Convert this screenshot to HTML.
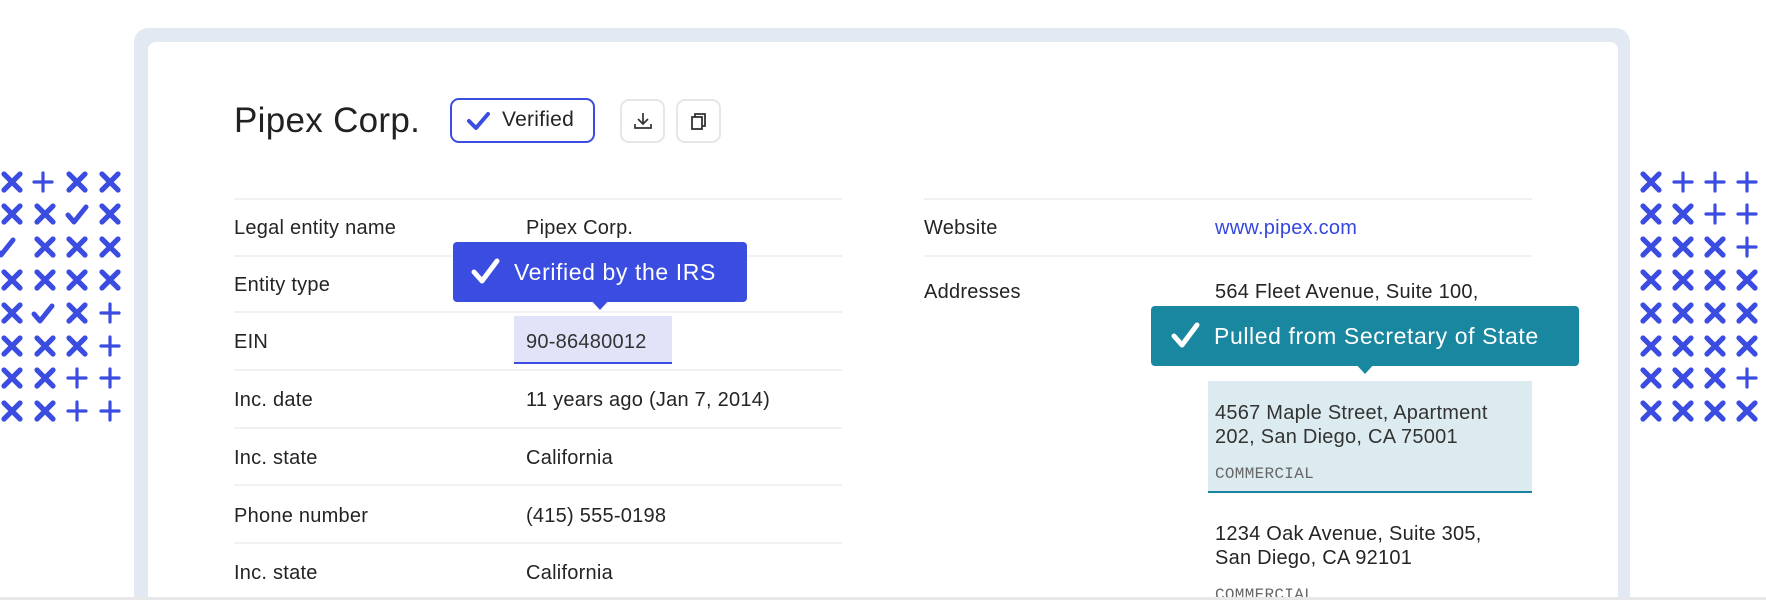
<!DOCTYPE html>
<html><head><meta charset="utf-8"><style>
*{margin:0;padding:0;box-sizing:border-box}
html,body{width:1766px;height:600px;overflow:hidden}
body{background:#fff;position:relative;font-family:"Liberation Sans",sans-serif;color:#222}
.abs{position:absolute}
.frame{left:134px;top:28px;width:1496px;height:572px;background:#e3e9f3;border-radius:14px 14px 0 0}
.card{left:148px;top:42px;width:1470px;height:558px;background:#fff;border-radius:8px 8px 0 0}
.line{position:absolute;height:2px;background:#f0f1f3}
.t{position:absolute;font-size:20px;line-height:24px;white-space:nowrap;color:#242424;letter-spacing:0.25px}
.mono{font-family:"Liberation Mono",monospace;font-size:16px;color:#666;letter-spacing:0.3px}
.tip{color:#fff;font-size:23px;line-height:28px;letter-spacing:0.6px}
</style></head><body>
<svg class="abs" style="left:0;top:0" width="1766" height="600">
<defs>
<g id="x"><path d="M-8,-8L8,8M8,-8L-8,8" stroke="#3b4de0" stroke-width="5.2" stroke-linecap="round"/></g>
<g id="p"><path d="M-9,0H9M0,-9V9" stroke="#3b4de0" stroke-width="3.2" stroke-linecap="round"/></g>
<g id="c"><path d="M-9,1L-3,8L9,-7" stroke="#3b4de0" stroke-width="5" fill="none" stroke-linecap="round" stroke-linejoin="round"/></g>
</defs>
<g>
<use href="#x" x="12" y="182"/><use href="#p" x="43" y="182"/><use href="#x" x="77" y="182"/><use href="#x" x="110" y="182"/>
<use href="#x" x="12" y="214"/><use href="#x" x="45" y="214"/><use href="#c" x="77" y="214"/><use href="#x" x="110" y="214"/>
<use href="#c" x="4" y="247"/><use href="#x" x="45" y="247"/><use href="#x" x="77" y="247"/><use href="#x" x="110" y="247"/>
<use href="#x" x="12" y="280"/><use href="#x" x="45" y="280"/><use href="#x" x="77" y="280"/><use href="#x" x="110" y="280"/>
<use href="#x" x="12" y="313"/><use href="#c" x="43" y="313"/><use href="#x" x="77" y="313"/><use href="#p" x="110" y="313"/>
<use href="#x" x="12" y="346"/><use href="#x" x="45" y="346"/><use href="#x" x="77" y="346"/><use href="#p" x="110" y="346"/>
<use href="#x" x="12" y="378"/><use href="#x" x="45" y="378"/><use href="#p" x="77" y="378"/><use href="#p" x="110" y="378"/>
<use href="#x" x="12" y="411"/><use href="#x" x="45" y="411"/><use href="#p" x="77" y="411"/><use href="#p" x="110" y="411"/>
</g>
<g>
<use href="#x" x="1651" y="182"/><use href="#p" x="1683" y="182"/><use href="#p" x="1715" y="182"/><use href="#p" x="1747" y="182"/>
<use href="#x" x="1651" y="214"/><use href="#x" x="1683" y="214"/><use href="#p" x="1715" y="214"/><use href="#p" x="1747" y="214"/>
<use href="#x" x="1651" y="247"/><use href="#x" x="1683" y="247"/><use href="#x" x="1715" y="247"/><use href="#p" x="1747" y="247"/>
<use href="#x" x="1651" y="280"/><use href="#x" x="1683" y="280"/><use href="#x" x="1715" y="280"/><use href="#x" x="1747" y="280"/>
<use href="#x" x="1651" y="313"/><use href="#x" x="1683" y="313"/><use href="#x" x="1715" y="313"/><use href="#x" x="1747" y="313"/>
<use href="#x" x="1651" y="346"/><use href="#x" x="1683" y="346"/><use href="#x" x="1715" y="346"/><use href="#x" x="1747" y="346"/>
<use href="#x" x="1651" y="378"/><use href="#x" x="1683" y="378"/><use href="#x" x="1715" y="378"/><use href="#p" x="1747" y="378"/>
<use href="#x" x="1651" y="411"/><use href="#x" x="1683" y="411"/><use href="#x" x="1715" y="411"/><use href="#x" x="1747" y="411"/>
</g>
</svg>
<div class="abs frame"></div>
<div class="abs card"></div>

<div class="t" style="left:234px;top:100px;font-size:35px;line-height:42px;color:#222;letter-spacing:0.3px">Pipex Corp.</div>
<div class="abs" style="left:450px;top:98px;width:145px;height:45px;border:2px solid #3b4de0;border-radius:9px"></div>
<svg class="abs" style="left:466px;top:110px" width="26" height="22"><path d="M3,11L10,18L22,4" stroke="#3b4de0" stroke-width="4" fill="none" stroke-linecap="round" stroke-linejoin="round"/></svg>
<div class="t" style="left:502px;top:108px;font-size:21px">Verified</div>
<div class="abs" style="left:620px;top:99px;width:45px;height:44px;border:2px solid #e6e6e6;border-radius:9px"></div>
<svg class="abs" style="left:631px;top:110px" width="24" height="22"><path d="M12,3V13M7,9L12,14L17,9M4,14V18H20V14" stroke="#333" stroke-width="1.7" fill="none"/></svg>
<div class="abs" style="left:676px;top:99px;width:45px;height:44px;border:2px solid #e6e6e6;border-radius:9px"></div>
<svg class="abs" style="left:686px;top:110px" width="24" height="22"><rect x="6" y="7" width="10" height="12" stroke="#333" stroke-width="1.8" fill="none"/><path d="M9,7V4H19V16H16" stroke="#333" stroke-width="1.8" fill="none"/></svg>

<div class="line" style="left:234px;top:198px;width:608px"></div>
<div class="line" style="left:234px;top:255px;width:608px"></div>
<div class="line" style="left:234px;top:311px;width:608px"></div>
<div class="line" style="left:234px;top:369px;width:608px"></div>
<div class="line" style="left:234px;top:427px;width:608px"></div>
<div class="line" style="left:234px;top:484px;width:608px"></div>
<div class="line" style="left:234px;top:542px;width:608px"></div>

<div class="t" style="left:234px;top:216px">Legal entity name</div><div class="t" style="left:526px;top:216px">Pipex Corp.</div>
<div class="t" style="left:234px;top:273px">Entity type</div>
<div class="abs" style="left:514px;top:316px;width:158px;height:48px;background:#e1e4f8;border-bottom:2px solid #3b4de0"></div>
<div class="t" style="left:234px;top:330px">EIN</div><div class="t" style="left:526px;top:330px;color:#333">90-86480012</div>
<div class="t" style="left:234px;top:388px">Inc. date</div><div class="t" style="left:526px;top:388px">11 years ago (Jan 7, 2014)</div>
<div class="t" style="left:234px;top:446px">Inc. state</div><div class="t" style="left:526px;top:446px">California</div>
<div class="t" style="left:234px;top:504px">Phone number</div><div class="t" style="left:526px;top:504px">(415) 555-0198</div>
<div class="t" style="left:234px;top:561px">Inc. state</div><div class="t" style="left:526px;top:561px">California</div>

<div class="abs" style="left:453px;top:242px;width:294px;height:60px;background:#3a4de0;border-radius:4px"></div>
<div class="abs" style="left:589px;top:298px;width:0;height:0;border-left:11px solid transparent;border-right:11px solid transparent;border-top:12px solid #3a4de0"></div>
<svg class="abs" style="left:470px;top:257px" width="32" height="30"><path d="M4,15L12,24L27,4" stroke="#fff" stroke-width="5" fill="none" stroke-linecap="round" stroke-linejoin="round"/></svg>
<div class="t tip" style="left:514px;top:258px">Verified by the IRS</div>

<div class="line" style="left:924px;top:198px;width:608px"></div>
<div class="line" style="left:924px;top:255px;width:608px"></div>
<div class="t" style="left:924px;top:216px">Website</div><div class="t" style="left:1215px;top:216px;color:#3447e0">www.pipex.com</div>
<div class="t" style="left:924px;top:280px">Addresses</div><div class="t" style="left:1215px;top:280px">564 Fleet Avenue, Suite 100,</div>

<div class="abs" style="left:1208px;top:381px;width:324px;height:112px;background:#dbebf0;border-bottom:2px solid #1a84a0"></div>
<div class="t" style="left:1215px;top:401px;line-height:24px;color:#333">4567 Maple Street, Apartment<br>202, San Diego, CA 75001</div>
<div class="t mono" style="left:1215px;top:462px">COMMERCIAL</div>
<div class="t" style="left:1215px;top:522px;line-height:24px">1234 Oak Avenue, Suite 305,<br>San Diego, CA 92101</div>
<div class="t mono" style="left:1215px;top:583px">COMMERCIAL</div>

<div class="abs" style="left:1151px;top:306px;width:428px;height:60px;background:#1a87a0;border-radius:4px"></div>
<div class="abs" style="left:1354px;top:362px;width:0;height:0;border-left:11px solid transparent;border-right:11px solid transparent;border-top:12px solid #1a87a0"></div>
<svg class="abs" style="left:1170px;top:321px" width="32" height="30"><path d="M4,15L12,24L27,4" stroke="#fff" stroke-width="5" fill="none" stroke-linecap="round" stroke-linejoin="round"/></svg>
<div class="t tip" style="left:1214px;top:322px">Pulled from Secretary of State</div>

<div class="abs" style="left:0;top:597px;width:1766px;height:3px;background:#e8e8ea"></div>
</body></html>
